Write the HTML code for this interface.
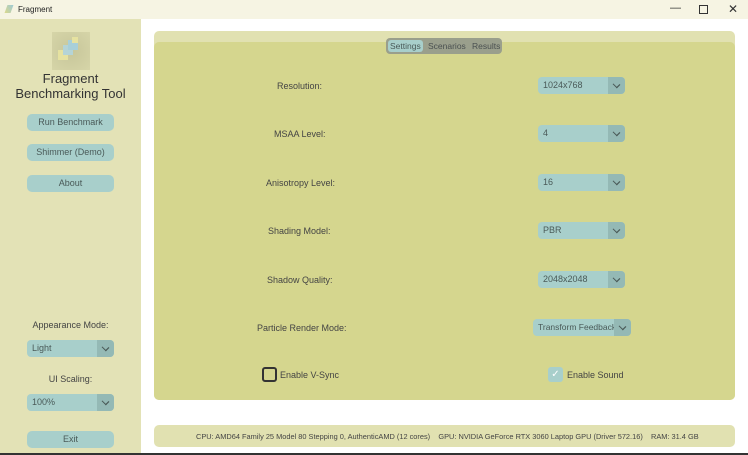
<!DOCTYPE html><html><head><style>
body{margin:0;width:748px;height:455px;overflow:hidden;font-family:"Liberation Sans",sans-serif;background:#fff;position:relative}
.a{position:absolute}
.t{font-size:9px;color:#444;white-space:nowrap}
.btn{position:absolute;background:#a8cfcb;border-radius:5px;font-size:9px;color:#4a5a58;text-align:center}
.dd{position:absolute;background:#a8cfcb;border-radius:4px;font-size:9px;color:#4a5a58;height:17px;line-height:17px;white-space:nowrap}
.dd span{padding-left:5px}
.dd i{position:absolute;right:0;top:0;width:17px;height:17px;background:#94b9b5;border-radius:0 4px 4px 0}
.dd i:after{content:"";position:absolute;left:6px;top:5px;width:4px;height:4px;border-right:1.5px solid #4a5a58;border-bottom:1.5px solid #4a5a58;transform:rotate(45deg) scaleX(1.2)}
</style></head><body>
<div class="a" style="left:0;top:0;width:748px;height:19px;background:#f6f4e3"></div>
<div class="a t" style="left:18px;top:5px;font-size:8px;color:#222">Fragment</div>
<div class="a" style="left:6px;top:5px;width:6px;height:8px;background:linear-gradient(45deg,#dcd98a,#9cc9d6);transform:skew(-20deg)"></div>
<div class="a t" style="left:670px;top:2px;font-size:11px;color:#333">—</div>
<div class="a" style="left:699px;top:5px;width:7px;height:7px;border:1px solid #333"></div>
<div class="a t" style="left:728px;top:2px;font-size:12px;color:#333">✕</div>
<div class="a" style="left:0;top:19px;width:141px;height:436px;background:#e3e2b6"></div>
<div class="a" style="left:52px;top:32px;width:38px;height:38px;background:radial-gradient(#c7c69a,#d6d5a8)"></div>
<div class="a" style="left:58px;top:50px;width:10px;height:10px;background:#e6e2a0"></div>
<div class="a" style="left:63px;top:45px;width:10px;height:10px;background:#b5d4d6"></div>
<div class="a" style="left:68px;top:40px;width:10px;height:10px;background:#a8cfd8"></div>
<div class="a" style="left:72px;top:37px;width:6px;height:6px;background:#e6e2a0"></div>
<div class="a" style="left:0;top:71px;width:141px;text-align:center;font-size:13px;color:#333;line-height:15px;font-weight:500">Fragment<br>Benchmarking Tool</div>
<div class="btn" style="left:27px;top:114px;width:87px;height:17px;line-height:17px">Run Benchmark</div>
<div class="btn" style="left:27px;top:144px;width:87px;height:17px;line-height:17px">Shimmer (Demo)</div>
<div class="btn" style="left:27px;top:175px;width:87px;height:17px;line-height:17px">About</div>
<div class="a t" style="left:0;width:141px;text-align:center;top:320px">Appearance Mode:</div>
<div class="dd" style="left:27px;top:340px;width:87px"><span>Light</span><i></i></div>
<div class="a t" style="left:0;width:141px;text-align:center;top:374px">UI Scaling:</div>
<div class="dd" style="left:27px;top:394px;width:87px"><span>100%</span><i></i></div>
<div class="btn" style="left:27px;top:431px;width:87px;height:17px;line-height:17px">Exit</div>
<div class="a" style="left:154px;top:31px;width:581px;height:369px;background:#e1e1b1;border-radius:5px"></div>
<div class="a" style="left:154px;top:42px;width:581px;height:358px;background:#d5d68e;border-radius:5px"></div>
<div class="a" style="left:386px;top:38px;width:116px;height:16px;background:#9a9f8c;border-radius:4px"></div>
<div class="a" style="left:388px;top:40px;width:35px;height:12px;background:#a8cfcb;border-radius:3px"></div>
<div class="a t" style="left:390px;top:41px;color:#4a5a58;font-size:8.5px">Settings</div>
<div class="a t" style="left:428px;top:41px;color:#4a5050;font-size:8.5px">Scenarios</div>
<div class="a t" style="left:472px;top:41px;color:#4a5050;font-size:8.5px">Results</div>
<div class="a t" style="left:277px;top:81px">Resolution:</div>
<div class="dd" style="left:538px;top:77px;width:87px"><span>1024x768</span><i></i></div>
<div class="a t" style="left:274px;top:129px">MSAA Level:</div>
<div class="dd" style="left:538px;top:125px;width:87px"><span>4</span><i></i></div>
<div class="a t" style="left:266px;top:178px">Anisotropy Level:</div>
<div class="dd" style="left:538px;top:174px;width:87px"><span>16</span><i></i></div>
<div class="a t" style="left:268px;top:226px">Shading Model:</div>
<div class="dd" style="left:538px;top:222px;width:87px"><span>PBR</span><i></i></div>
<div class="a t" style="left:267px;top:275px">Shadow Quality:</div>
<div class="dd" style="left:538px;top:271px;width:87px"><span>2048x2048</span><i></i></div>
<div class="a t" style="left:257px;top:323px">Particle Render Mode:</div>
<div class="dd" style="left:533px;top:319px;width:98px;font-size:8.5px"><span>Transform Feedback</span><i></i></div>
<div class="a" style="left:262px;top:367px;width:11px;height:11px;border:2px solid #333;border-radius:3px"></div>
<div class="a t" style="left:280px;top:370px">Enable V-Sync</div>
<div class="a" style="left:548px;top:367px;width:15px;height:15px;background:#a8cfcb;border-radius:3px;color:#fff;font-size:10px;text-align:center;line-height:15px">✓</div>
<div class="a t" style="left:567px;top:370px">Enable Sound</div>
<div class="a" style="left:154px;top:425px;width:581px;height:22px;background:#e1e1b1;border-radius:5px"></div>
<div class="a t" style="left:196px;top:432px;font-size:7.4px">CPU: AMD64 Family 25 Model 80 Stepping 0, AuthenticAMD (12 cores)&nbsp;&nbsp;&nbsp;&nbsp;GPU: NVIDIA GeForce RTX 3060 Laptop GPU (Driver 572.16)&nbsp;&nbsp;&nbsp;&nbsp;RAM: 31.4 GB</div>
<div class="a" style="left:0;top:453px;width:748px;height:2px;background:#333"></div>
</body></html>
